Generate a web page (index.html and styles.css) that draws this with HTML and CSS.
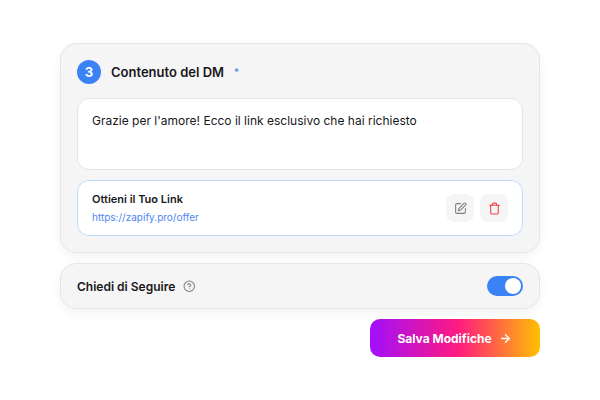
FILE: index.html
```html
<!DOCTYPE html>
<html lang="it">
<head>
<meta charset="utf-8">
<title>Contenuto del DM</title>
<link rel="stylesheet" href="styles.css">
</head>
<body>
<main class="wrap">
  <section class="card">
    <header class="head">
      <span class="step">3</span>
      <h2 class="title">Contenuto del DM</h2>
      <span class="req">*</span>
    </header>
    <div class="message">Grazie per l'amore! Ecco il link esclusivo che hai richiesto</div>
    <div class="link">
      <div class="link-text">
        <div class="link-title">Ottieni il Tuo Link</div>
        <div class="link-url">https://zapify.pro/offer</div>
      </div>
      <div class="actions">
        <span class="act">
          <svg class="ico" viewBox="0 0 24 24" fill="none" stroke="#808080" stroke-width="2" stroke-linecap="round" stroke-linejoin="round"><path d="M12 3H5a2 2 0 0 0-2 2v14a2 2 0 0 0 2 2h14a2 2 0 0 0 2-2v-7"/><path d="M18.375 2.625a1 1 0 0 1 3 3l-9.013 9.014a2 2 0 0 1-.853.505l-2.873.84a.5.5 0 0 1-.62-.62l.84-2.873a2 2 0 0 1 .506-.852z"/></svg>
        </span>
        <span class="act">
          <svg class="ico" viewBox="0 0 24 24" fill="none" stroke="#ef4444" stroke-width="2" stroke-linecap="round" stroke-linejoin="round"><path d="M3 6h18"/><path d="M19 6v14a2 2 0 0 1-2 2H7a2 2 0 0 1-2-2V6"/><path d="M8 6V4a2 2 0 0 1 2-2h4a2 2 0 0 1 2 2v2"/></svg>
        </span>
      </div>
    </div>
  </section>
  <section class="card follow">
    <div class="follow-label">
      <span class="follow-text">Chiedi di Seguire</span>
      <svg class="help" viewBox="0 0 24 24" fill="none" stroke="#808080" stroke-width="2" stroke-linecap="round" stroke-linejoin="round"><circle cx="12" cy="12" r="10"/><path d="M9.09 9a3 3 0 0 1 5.83 1c0 2-3 3-3 3"/><path d="M12 17h.01"/></svg>
    </div>
    <span class="toggle"><span class="knob"></span></span>
  </section>
  <div class="footer">
    <button class="save" type="button">Salva Modifiche
      <svg class="arrow" viewBox="0 0 24 24" fill="none" stroke="#fff" stroke-width="2.5" stroke-linecap="round" stroke-linejoin="round"><path d="M5 12h14"/><path d="m12 5 7 7-7 7"/></svg>
    </button>
  </div>
</main>
</body>
</html>
```
FILE: styles.css
```css
* { box-sizing: border-box; }
html, body { margin: 0; background: #fff; }
body { width: 600px; height: 400px; overflow: hidden; font-family: Inter, sans-serif; color: #18181b; }
.wrap { width: 480px; margin: 43px 0 0 60px; display: flex; flex-direction: column; gap: 10px; }
.card { background: #f5f5f5; border: 1px solid #e5e5e5; border-radius: 16px; box-shadow: 0 4px 12px rgba(0,0,0,.05); padding: 16px; }
.head { display: flex; align-items: center; height: 24px; margin-bottom: 14px; }
.step { width: 24px; height: 24px; border-radius: 50%; background: #3b82f6; color: #fff; font-size: 13px; font-weight: 700; display: flex; align-items: center; justify-content: center; }
.title { margin: 0 0 0 10px; font-size: 13px; font-weight: 600; line-height: 24px; }
.req { margin-left: 10px; font-size: 10px; color: #3b82f6; line-height: 24px; }
.message { height: 72px; background: #fff; border: 1px solid #e5e5e5; border-radius: 12px; padding: 14px; font-size: 12px; line-height: 16px; color: #18181b; }
.link { height: 56px; margin-top: 10px; background: #fff; border: 1px solid #bfdbfe; border-radius: 12px; padding: 0 14px; display: flex; align-items: center; justify-content: space-between; }
.link-title { font-size: 11px; font-weight: 600; line-height: 14px; }
.link-url { font-size: 10px; line-height: 14px; margin-top: 4px; color: #4f85f6; }
.actions { display: flex; gap: 6px; }
.act { width: 28px; height: 28px; border-radius: 8px; background: #f5f5f5; display: flex; align-items: center; justify-content: center; }
.ico { width: 13px; height: 13px; display: block; }
.follow { height: 46px; padding: 0 16px; display: flex; align-items: center; justify-content: space-between; }
.follow-label { display: flex; align-items: center; gap: 8px; }
.follow-text { font-size: 12px; font-weight: 600; }
.help { width: 12.5px; height: 12.5px; display: block; }
.toggle { width: 36px; height: 20px; border-radius: 10px; background: #3b82f6; padding: 2px; display: flex; justify-content: flex-end; }
.knob { width: 16px; height: 16px; border-radius: 50%; background: #fff; }
.footer { display: flex; justify-content: flex-end; }
.save { width: 170px; height: 38px; border: 0; border-radius: 10px; background: linear-gradient(90deg, #a10ffc, #ff1a7f 52%, #ffc000); color: #fff; font-family: Inter, sans-serif; font-size: 12px; font-weight: 700; display: flex; align-items: center; justify-content: center; gap: 7px; padding: 0 1px 0 0; }
.arrow { width: 13px; height: 13px; display: block; }
```
